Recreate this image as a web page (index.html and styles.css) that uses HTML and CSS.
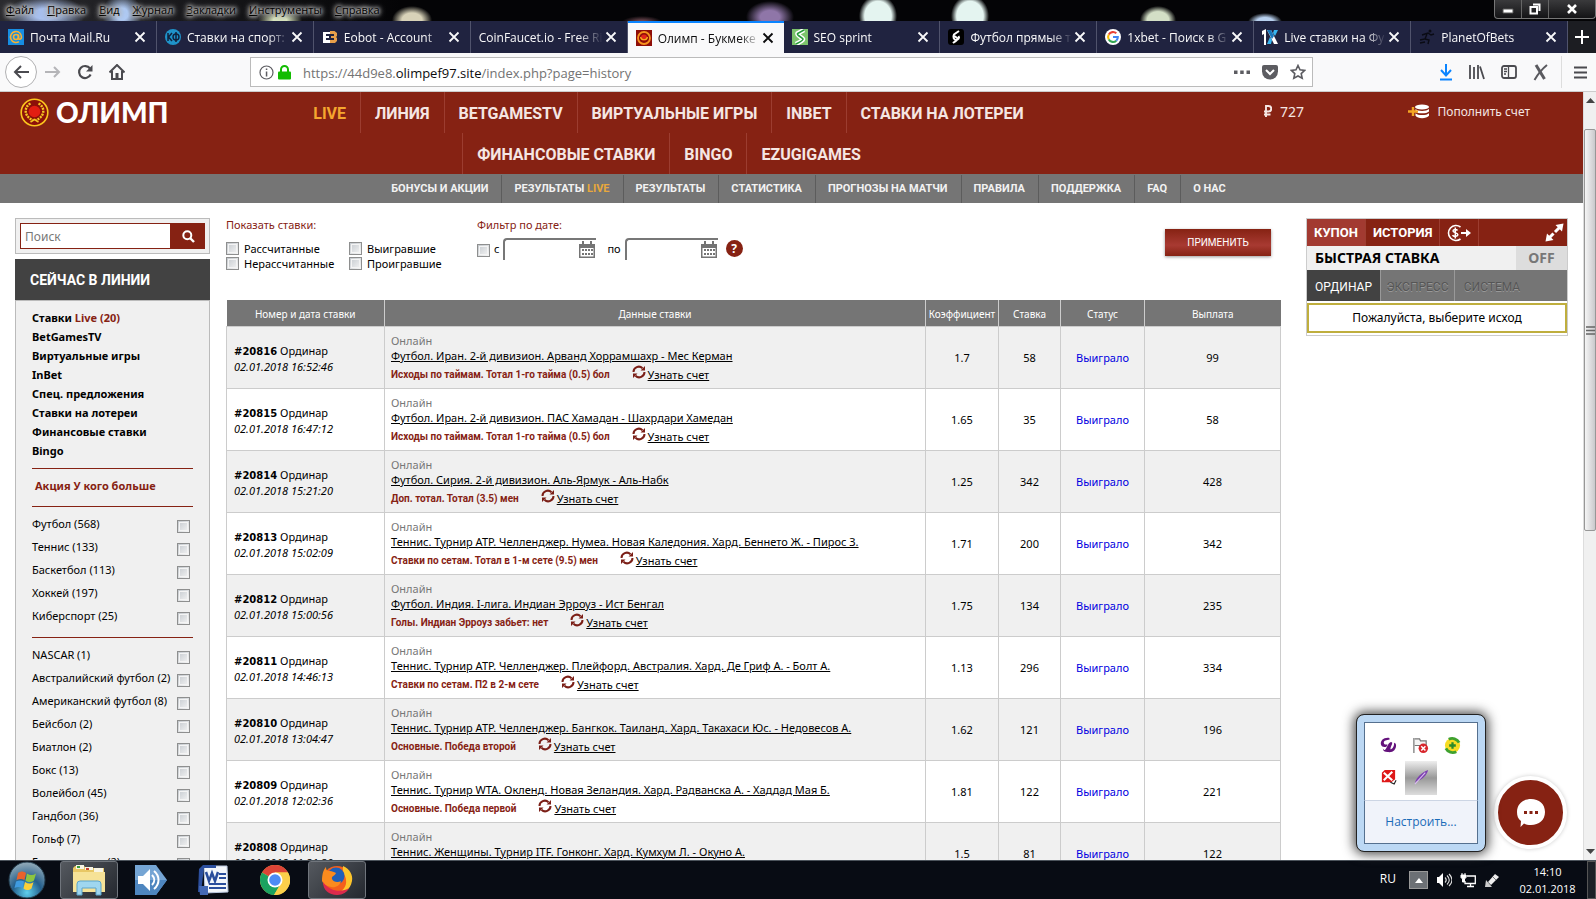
FILE: index.html
```html
<!DOCTYPE html>
<html lang="ru">
<head>
    <meta charset="UTF-8">
    <meta name="viewport" content="width=device-width, initial-scale=1.0">
    <title>Олимп - Букмекерская контора</title>
    <link rel="stylesheet" href="styles.css">
</head>
<body>
    <svg class="sprite" aria-hidden="true">
        <symbol id="x" viewBox="0 0 12 12"><path d="M1.500 1.500L10.500 10.500M10.500 1.500L1.500 10.500" fill="none" stroke="currentColor" stroke-width="1.800"/></symbol>
        <symbol id="refresh" viewBox="0 0 14 14"><path d="M1.500 7A5.300 5.300 0 0 1 10.500 3.200M12.500 7A5.300 5.300 0 0 1 3.500 10.800" fill="none" stroke="#7b1f17" stroke-width="2"/><path d="M13 1V5.500H8.500zM1 13V8.500H5.500z" fill="#7b1f17"/></symbol>
        <symbol id="calendar" viewBox="0 0 18 18"><path d="M1 3h16v14H1z" fill="#747474"/><path d="M4 0h2v4H4zM12 0h2v4h-2z" fill="#747474"/><path d="M2.500 7h13v8.500h-13z" fill="#fff"/><path d="M4 8h2v2H4zM7 8h2v2H7zM10 8h2v2h-2zM13 8h2v2h-2zM4 12h2v2H4zM7 12h2v2H7zM10 12h2v2h-2zM13 12h2v2h-2z" fill="#747474"/></symbol>
    </svg>

    <!-- Window menu -->
    <header class="menubar">
        <nav class="menu">
            <a href="#"><u>Ф</u>айл</a>
            <a href="#"><u>П</u>равка</a>
            <a href="#"><u>В</u>ид</a>
            <a href="#"><u>Ж</u>урнал</a>
            <a href="#"><u>З</u>акладки</a>
            <a href="#"><u>И</u>нструменты</a>
            <a href="#"><u>С</u>правка</a>
        </nav>
        <div class="window-buttons">
            <button type="button" aria-label="Свернуть"><svg width="12" height="12" viewBox="0 0 12 12"><path d="M1 6h10v4H1z" fill="#fff" stroke="#555"/></svg></button>
            <button type="button" aria-label="Восстановить"><svg width="12" height="12" viewBox="0 0 12 12"><path d="M4 1.500h6.500V8M1.500 4h6.500v6.500H1.500z" fill="none" stroke="#fff" stroke-width="2"/></svg></button>
            <button type="button" class="wide" aria-label="Закрыть"><svg width="12" height="12" viewBox="0 0 12 12"><path d="M2 2l8 8M10 2L2 10" stroke="#fff" stroke-width="2.600"/></svg></button>
        </div>
    </header>

    <!-- Browser tabs -->
    <div class="tabs">
        <div class="tab"><svg class="fav" viewBox="0 0 16 16"><path d="M0 0h16v16H0z" fill="#168de2"/><circle cx="8" cy="8" r="2.500" fill="none" stroke="#f9b233" stroke-width="1.600"/><path d="M10.500 5.500v3.500c0 2 3 1.500 3-1A5.500 5.500 0 1 0 11 12.600" fill="none" stroke="#f9b233" stroke-width="1.600"/></svg><span>Почта Mail.Ru</span><button type="button" aria-label="Закрыть вкладку"><svg><use href="#x"/></svg></button></div>
        <div class="tab"><svg class="fav" viewBox="0 0 16 16"><circle cx="8" cy="8" r="8" fill="#1f93c9"/><path d="M3 4v8M7 4L3.500 8 7 12M11 3v10" stroke="#10213c" stroke-width="1.500" fill="none"/><ellipse cx="11" cy="8" rx="3" ry="3" fill="none" stroke="#10213c" stroke-width="1.400"/></svg><span>Ставки на спорт:</span><button type="button" aria-label="Закрыть вкладку"><svg><use href="#x"/></svg></button></div>
        <div class="tab"><svg class="fav" viewBox="0 0 16 16"><path d="M1 3h7v2H4v2h3v2H4v2h4v3H1z" fill="#fff"/><path d="M8 2h4.500L15 4v3l-1 1 1 1v3l-2 2H8v-3h4V9H9V7h3V5H8z" fill="#e9a04a"/></svg><span>Eobot - Account</span><button type="button" aria-label="Закрыть вкладку"><svg><use href="#x"/></svg></button></div>
        <div class="tab"><span>CoinFaucet.io - Free Ri</span><button type="button" aria-label="Закрыть вкладку"><svg><use href="#x"/></svg></button></div>
        <div class="tab active"><svg class="fav" viewBox="0 0 16 16"><path d="M0 0h16v16H0z" fill="#8e0d08"/><circle cx="8" cy="8" r="6" fill="none" stroke="#f7931e" stroke-width="1.800"/><circle cx="8" cy="7.500" r="3" fill="#e2231a"/><path d="M4.500 7a3.600 3.600 0 0 0 7 0" fill="none" stroke="#f7b21e" stroke-width="1.200"/></svg><span>Олимп - Букмеке</span><button type="button" aria-label="Закрыть вкладку"><svg><use href="#x"/></svg></button></div>
        <div class="tab"><svg class="fav" viewBox="0 0 16 16"><path d="M0 0h16v16H0z" fill="#7cc36b"/><path d="M12 1L5.500 4.500c-1 2 5 4 5.500 5.500S7 13.500 4 15" fill="none" stroke="#fff" stroke-width="4.500"/><path d="M12 1L5.500 4.500c-1 2 5 4 5.500 5.500S7 13.500 4 15" fill="none" stroke="#279b38" stroke-width="1.600"/></svg><span>SEO sprint</span><button type="button" aria-label="Закрыть вкладку"><svg><use href="#x"/></svg></button></div>
        <div class="tab"><svg class="fav" viewBox="0 0 16 16"><rect width="16" height="16" rx="3" fill="#000"/><path d="M11 2L6 5.500c-1.500 2 4 2.500 3.500 4.500S7 12 5 14M6 5.500C4.500 8 6 11 8 11s4-2 2.500-4" fill="none" stroke="#fff" stroke-width="2"/></svg><span>Футбол прямые т</span><button type="button" aria-label="Закрыть вкладку"><svg><use href="#x"/></svg></button></div>
        <div class="tab"><svg class="fav" viewBox="0 0 16 16"><circle cx="8" cy="8" r="8" fill="#fff"/><g fill="none" stroke-width="2.100"><path d="M11.300 4.300A4.900 4.900 0 0 0 3.800 5.500" stroke="#ea4335"/><path d="M3.800 5.500a4.900 4.900 0 0 0 0 5" stroke="#fbbc05"/><path d="M3.800 10.500a4.900 4.900 0 0 0 7.500 1.200" stroke="#34a853"/><path d="M8 8h4.800a4.900 4.900 0 0 1-1.500 3.700" stroke="#4285f4"/></g></svg><span>1xbet - Поиск в G</span><button type="button" aria-label="Закрыть вкладку"><svg><use href="#x"/></svg></button></div>
        <div class="tab"><svg class="fav" viewBox="0 0 16 16"><path d="M0 2l4-2v16H2V5L0 6z" fill="#fff"/><path d="M5 1h4l7 14h-4z" fill="#fff"/><path d="M12 1h4l-3 6-2-3zM5 15h4l1-4-2-3z" fill="#36b4f0"/><path d="M5 1h4l3 6-2 3z" fill="#1677bd"/></svg><span>Live ставки на Фу</span><button type="button" aria-label="Закрыть вкладку"><svg><use href="#x"/></svg></button></div>
        <div class="tab"><svg class="fav" viewBox="0 0 16 16"><circle cx="11" cy="2" r="1.500" fill="#0a0b14"/><path d="M3 6l6-2 3 2 3-1M8 5l-2 5-5 1M6 10l4 1-1 4M1 14l5-1" fill="none" stroke="#0a0b14" stroke-width="1.400"/></svg><span>PlanetOfBets</span><button type="button" aria-label="Закрыть вкладку"><svg><use href="#x"/></svg></button></div>
        <button type="button" class="new-tab" aria-label="Новая вкладка"><svg width="14" height="14" viewBox="0 0 14 14"><path d="M7 0v14M0 7h14" stroke="#fff" stroke-width="2"/></svg></button>
    </div>

    <!-- Address bar -->
    <div class="toolbar">
        <div class="nav-buttons">
            <button type="button" class="back" aria-label="Назад"><svg width="16" height="16" viewBox="0 0 16 16"><path d="M16 8H2M8 2L2 8l6 6" fill="none" stroke="#4a4a4f" stroke-width="2"/></svg></button>
            <button type="button" aria-label="Вперёд"><svg width="16" height="16" viewBox="0 0 16 16"><path d="M0 8h14M9 3l5 5-5 5" fill="none" stroke="#b5b5b8" stroke-width="2"/></svg></button>
            <button type="button" aria-label="Обновить"><svg width="16" height="16" viewBox="0 0 16 16"><path d="M13 4.500A6 6 0 1 0 13.600 10.500" fill="none" stroke="#4a4a4f" stroke-width="2.200"/><path d="M15.500 1v6.500H9z" fill="#4a4a4f"/></svg></button>
            <button type="button" aria-label="Домой"><svg width="16" height="16" viewBox="0 0 16 16"><path d="M0.500 8.500L8 1l7.500 7.500M3 7v8h10V7" fill="none" stroke="#4a4a4f" stroke-width="2"/><path d="M6.500 9h3v6h-3z" fill="#4a4a4f"/></svg></button>
        </div>
        <div class="urlbar">
            <svg width="15" height="15" viewBox="0 0 15 15"><circle cx="7.500" cy="7.500" r="6.500" fill="none" stroke="#5c5c61" stroke-width="1.200"/><path d="M6.800 6.500h1.500v5H6.800zM6.800 3.500h1.500v1.600H6.800z" fill="#5c5c61"/></svg>
            <svg width="13" height="15" viewBox="0 0 13 15"><path d="M3 7V4.500a3.500 3.500 0 0 1 7 0V7" fill="none" stroke="#12bc00" stroke-width="2"/><rect y="6.500" width="13" height="8" rx="1" fill="#12bc00"/></svg>
            <div class="url">https://44d9e8.<b>olimpef97.site</b>/index.php?page=history</div>
            <svg width="16" height="16" viewBox="0 0 16 16"><path d="M0 6.500h3.500v3.500H0zM6.200 6.500h3.500v3.500H6.200zM12.500 6.500H16v3.500h-3.500z" fill="#5c5c61"/></svg>
            <svg width="16" height="16" viewBox="0 0 16 16"><path d="M0 3a2 2 0 0 1 2-2h12a2 2 0 0 1 2 2v4.500a8 8 0 0 1-16 0z" fill="#5c5c61"/><path d="M4 6l4 4 4-4" fill="none" stroke="#fff" stroke-width="2"/></svg>
            <svg width="16" height="16" viewBox="0 0 16 16"><path d="M8 1.500l2 4.300 4.700.6-3.500 3.200 1 4.700L8 12l-4.200 2.300 1-4.700L1.300 6.400 6 5.800z" fill="none" stroke="#5c5c61" stroke-width="1.600"/></svg>
        </div>
        <div class="tool-icons">
            <button type="button" aria-label="Загрузки"><svg width="14" height="18" viewBox="0 0 14 18"><path d="M7 1v11M2 7l5 5.500L12 7M1 16.500h12" fill="none" stroke="#0a84ff" stroke-width="2"/></svg></button>
            <button type="button" aria-label="Библиотека"><svg width="16" height="16" viewBox="0 0 16 16"><path d="M1 1v14M5 3v12M9 1v14M11 2.500L15 15" fill="none" stroke="#4a4a4f" stroke-width="1.800"/></svg></button>
            <button type="button" aria-label="Боковая панель"><svg width="16" height="14" viewBox="0 0 16 14"><rect x="1" y="1" width="14" height="12" rx="2" fill="none" stroke="#4a4a4f" stroke-width="1.800"/><path d="M7.500 1v12M3 4h3M3 6.500h3M3 9h2" stroke="#4a4a4f" stroke-width="1.300"/></svg></button>
            <button type="button" aria-label="Расширение"><svg width="16" height="17" viewBox="0 0 16 17"><path d="M3 1l8.500 14" fill="none" stroke="#5a5a5f" stroke-width="3"/><path d="M14 1C9 5 5 10 1.500 16" fill="none" stroke="#5a5a5f" stroke-width="2"/></svg></button>
            <button type="button" class="burger" aria-label="Меню"><svg width="13" height="13" viewBox="0 0 13 13"><path d="M0 1.500h13M0 6.500h13M0 11.500h13" stroke="#4a4a4f" stroke-width="2"/></svg></button>
        </div>
    </div>

    <div class="viewport">
        <div class="site">
            <header class="site-header">
                <a href="#" class="logo">
                    <svg width="29" height="29" viewBox="0 0 29 29"><circle cx="14.500" cy="14.500" r="13.300" fill="#8c1009" stroke="#fbc51e" stroke-width="1.600"/><circle cx="14.500" cy="13.500" r="5.800" fill="#e21d12"/><path d="M10.500 5.500C3.500 9 4 19 13 22M18.500 5.500C25.500 9 25 19 16 22" fill="none" stroke="#f5c623" stroke-width="2.400" stroke-dasharray="2 1"/><path d="M10.500 24l4-2.500 4 2.500" fill="none" stroke="#f5c623" stroke-width="1.500"/></svg>
                    <span>ОЛИМП</span>
                </a>
                <nav class="main-nav">
                    <ul>
                        <li><a href="#" class="live">LIVE</a></li>
                        <li><a href="#">ЛИНИЯ</a></li>
                        <li><a href="#">BETGAMESTV</a></li>
                        <li><a href="#">ВИРТУАЛЬНЫЕ ИГРЫ</a></li>
                        <li><a href="#">INBET</a></li>
                        <li><a href="#">СТАВКИ НА ЛОТЕРЕИ</a></li>
                    </ul>
                    <ul>
                        <li><a href="#">ФИНАНСОВЫЕ СТАВКИ</a></li>
                        <li><a href="#">BINGO</a></li>
                        <li><a href="#">EZUGIGAMES</a></li>
                    </ul>
                </nav>
                <div class="account">
                    <span class="balance"><svg width="8" height="12" viewBox="0 0 8 12"><path d="M2 12V1h2.500a2.700 2.700 0 0 1 0 5.500H0M0 9.500h6.500" fill="none" stroke="#f5e6e3" stroke-width="1.900"/></svg>727</span>
                    <a href="#" class="deposit"><svg width="22" height="15" viewBox="0 0 22 15"><ellipse cx="14" cy="3" rx="7" ry="2.600" fill="#fff"/><path d="M7.500 5c2 2.500 11 2.500 13.500 0v2.400c-2.500 2.600-11.500 2.600-13.500 0zM7.500 9.200c2 2.500 11 2.500 13.500 0v2.500c-2.500 3.300-11.500 3.300-13.500 0z" fill="#fff"/><path d="M0 7.500h10M5 3v9" stroke="#f5a623" stroke-width="2.400"/></svg>Пополнить счет</a>
                </div>
            </header>
            <nav class="sub-nav">
                <a href="#">БОНУСЫ И АКЦИИ</a>
                <a href="#">РЕЗУЛЬТАТЫ <em>LIVE</em></a>
                <a href="#">РЕЗУЛЬТАТЫ</a>
                <a href="#">СТАТИСТИКА</a>
                <a href="#">ПРОГНОЗЫ НА МАТЧИ</a>
                <a href="#">ПРАВИЛА</a>
                <a href="#">ПОДДЕРЖКА</a>
                <a href="#">FAQ</a>
                <a href="#">О НАС</a>
            </nav>

            <div class="columns">
                <aside class="sidebar">
                    <form class="search">
                        <input type="text" placeholder="Поиск" aria-label="Поиск">
                        <button type="button" aria-label="Найти"><svg width="13" height="13" viewBox="0 0 13 13"><circle cx="5.300" cy="5.300" r="4" fill="none" stroke="#fff" stroke-width="2"/><path d="M8 8l4 4" stroke="#fff" stroke-width="2.400"/></svg></button>
                    </form>
                    <h2>СЕЙЧАС В ЛИНИИ</h2>
                    <div class="side-box">
                        <ul class="links">
                            <li><a href="#">Ставки <em>Live (20)</em></a></li>
                            <li><a href="#">BetGamesTV</a></li>
                            <li><a href="#">Виртуальные игры</a></li>
                            <li><a href="#">InBet</a></li>
                            <li><a href="#">Спец. предложения</a></li>
                            <li><a href="#">Ставки на лотереи</a></li>
                            <li><a href="#">Финансовые ставки</a></li>
                            <li><a href="#">Bingo</a></li>
                        </ul>
                        <a href="#" class="promo">Акция У кого больше</a>
                        <div class="sports">
                            <label>Футбол (568)<input type="checkbox"></label>
                            <label>Теннис (133)<input type="checkbox"></label>
                            <label>Баскетбол (113)<input type="checkbox"></label>
                            <label>Хоккей (197)<input type="checkbox"></label>
                            <label>Киберспорт (25)<input type="checkbox"></label>
                        </div>
                        <div class="sports all">
                            <label>NASCAR (1)<input type="checkbox"></label>
                            <label>Австралийский футбол (2)<input type="checkbox"></label>
                            <label>Американский футбол (8)<input type="checkbox"></label>
                            <label>Бейсбол (2)<input type="checkbox"></label>
                            <label>Биатлон (2)<input type="checkbox"></label>
                            <label>Бокс (13)<input type="checkbox"></label>
                            <label>Волейбол (45)<input type="checkbox"></label>
                            <label>Гандбол (36)<input type="checkbox"></label>
                            <label>Гольф (7)<input type="checkbox"></label>
                            <label>Горные лыжи (2)<input type="checkbox"></label>
                        </div>
                    </div>
                </aside>

                <main class="history">
                    <form class="filters">
                        <fieldset>
                            <legend>Показать ставки:</legend>
                            <div class="checks">
                                <label><input type="checkbox">Рассчитанные</label>
                                <label><input type="checkbox">Выигравшие</label>
                                <label><input type="checkbox">Нерассчитанные</label>
                                <label><input type="checkbox">Проигравшие</label>
                            </div>
                        </fieldset>
                        <fieldset>
                            <legend>Фильтр по дате:</legend>
                            <div class="dates">
                                <input type="checkbox" id="byDate">
                                <label for="byDate">с</label>
                                <span class="date"><input type="text" aria-label="Дата с"><svg width="18" height="18"><use href="#calendar"/></svg></span>
                                <label for="dateTo" class="to">по</label>
                                <span class="date"><input type="text" id="dateTo"><svg width="18" height="18"><use href="#calendar"/></svg></span>
                                <button type="button" class="help">?</button>
                            </div>
                        </fieldset>
                        <button type="button" class="apply">ПРИМЕНИТЬ</button>
                    </form>

                    <table class="bets">
                        <colgroup><col class="c-num"><col><col class="c-odds"><col class="c-stake"><col class="c-status"><col class="c-pay"></colgroup>
                        <thead>
                            <tr><th>Номер и дата ставки</th><th>Данные ставки</th><th>Коэффициент</th><th>Ставка</th><th>Статус</th><th>Выплата</th></tr>
                        </thead>
                        <tbody>
                            <tr>
                                <td><b>#20816</b> Ординар<i>02.01.2018 16:52:46</i></td>
                                <td><small>Онлайн</small><a href="#">Футбол. Иран. 2-й дивизион. Арванд Хоррамшахр - Мес Керман</a><p><strong>Исходы по таймам. Тотал 1-го тайма (0.5) бол</strong><svg><use href="#refresh"/></svg><a href="#">Узнать счет</a></p></td>
                                <td>1.7</td><td>58</td><td class="won">Выиграло</td><td>99</td>
                            </tr>
                            <tr>
                                <td><b>#20815</b> Ординар<i>02.01.2018 16:47:12</i></td>
                                <td><small>Онлайн</small><a href="#">Футбол. Иран. 2-й дивизион. ПАС Хамадан - Шахрдари Хамедан</a><p><strong>Исходы по таймам. Тотал 1-го тайма (0.5) бол</strong><svg><use href="#refresh"/></svg><a href="#">Узнать счет</a></p></td>
                                <td>1.65</td><td>35</td><td class="won">Выиграло</td><td>58</td>
                            </tr>
                            <tr>
                                <td><b>#20814</b> Ординар<i>02.01.2018 15:21:20</i></td>
                                <td><small>Онлайн</small><a href="#">Футбол. Сирия. 2-й дивизион. Аль-Ярмук - Аль-Набк</a><p><strong>Доп. тотал. Тотал (3.5) мен</strong><svg><use href="#refresh"/></svg><a href="#">Узнать счет</a></p></td>
                                <td>1.25</td><td>342</td><td class="won">Выиграло</td><td>428</td>
                            </tr>
                            <tr>
                                <td><b>#20813</b> Ординар<i>02.01.2018 15:02:09</i></td>
                                <td><small>Онлайн</small><a href="#">Теннис. Турнир ATP. Челленджер. Нумеа. Новая Каледония. Хард. Беннето Ж. - Пирос З.</a><p><strong>Ставки по сетам. Тотал в 1-м сете (9.5) мен</strong><svg><use href="#refresh"/></svg><a href="#">Узнать счет</a></p></td>
                                <td>1.71</td><td>200</td><td class="won">Выиграло</td><td>342</td>
                            </tr>
                            <tr>
                                <td><b>#20812</b> Ординар<i>02.01.2018 15:00:56</i></td>
                                <td><small>Онлайн</small><a href="#">Футбол. Индия. I-лига. Индиан Эрроуз - Ист Бенгал</a><p><strong>Голы. Индиан Эрроуз забьет: нет</strong><svg><use href="#refresh"/></svg><a href="#">Узнать счет</a></p></td>
                                <td>1.75</td><td>134</td><td class="won">Выиграло</td><td>235</td>
                            </tr>
                            <tr>
                                <td><b>#20811</b> Ординар<i>02.01.2018 14:46:13</i></td>
                                <td><small>Онлайн</small><a href="#">Теннис. Турнир ATP. Челленджер. Плейфорд. Австралия. Хард. Де Гриф А. - Болт А.</a><p><strong>Ставки по сетам. П2 в 2-м сете</strong><svg><use href="#refresh"/></svg><a href="#">Узнать счет</a></p></td>
                                <td>1.13</td><td>296</td><td class="won">Выиграло</td><td>334</td>
                            </tr>
                            <tr>
                                <td><b>#20810</b> Ординар<i>02.01.2018 13:04:47</i></td>
                                <td><small>Онлайн</small><a href="#">Теннис. Турнир ATP. Челленджер. Бангкок. Таиланд. Хард. Такахаси Юс. - Недовесов А.</a><p><strong>Основные. Победа второй</strong><svg><use href="#refresh"/></svg><a href="#">Узнать счет</a></p></td>
                                <td>1.62</td><td>121</td><td class="won">Выиграло</td><td>196</td>
                            </tr>
                            <tr>
                                <td><b>#20809</b> Ординар<i>02.01.2018 12:02:36</i></td>
                                <td><small>Онлайн</small><a href="#">Теннис. Турнир WTA. Окленд. Новая Зеландия. Хард. Радванска А. - Хаддад Мая Б.</a><p><strong>Основные. Победа первой</strong><svg><use href="#refresh"/></svg><a href="#">Узнать счет</a></p></td>
                                <td>1.81</td><td>122</td><td class="won">Выиграло</td><td>221</td>
                            </tr>
                            <tr>
                                <td><b>#20808</b> Ординар<i>02.01.2018 11:21:30</i></td>
                                <td><small>Онлайн</small><a href="#">Теннис. Женщины. Турнир ITF. Гонконг. Хард. Кумхум Л. - Окуно А.</a><p><strong>Основные. Победа первой</strong><svg><use href="#refresh"/></svg><a href="#">Узнать счет</a></p></td>
                                <td>1.5</td><td>81</td><td class="won">Выиграло</td><td>122</td>
                            </tr>
                        </tbody>
                    </table>
                </main>

                <aside class="coupon">
                    <div class="coupon-tabs">
                        <button type="button" class="current">КУПОН</button>
                        <button type="button">ИСТОРИЯ</button>
                        <button type="button" class="cash" aria-label="Продать ставку"><svg width="24" height="18" viewBox="0 0 24 18"><path d="M13.500 3A7.500 7.500 0 1 0 13.500 15" fill="none" stroke="#fff" stroke-width="1.600"/><path d="M10.500 6.500C9.500 5 6 5.200 6 7s4.800 1.500 4.800 3.600S6.500 13 5.500 11.200M8.300 3.500v11" fill="none" stroke="#fff" stroke-width="1.500"/><path d="M14 8h5V5l5 4-5 4v-3h-5z" fill="#fff"/></svg></button>
                        <button type="button" class="expand" aria-label="Развернуть"><svg width="19" height="19" viewBox="0 0 19 19"><path d="M4 15L8.500 10.500M10 9L15 4" stroke="#fff" stroke-width="3"/><path d="M18.500.500L17 8.500L10.500 2zM.5 18.500L2 10.500L8.500 17z" fill="#fff"/></svg></button>
                    </div>
                    <div class="quick"><span>БЫСТРАЯ СТАВКА</span><button type="button">OFF</button></div>
                    <div class="types">
                        <button type="button" class="current">ОРДИНАР</button>
                        <button type="button">ЭКСПРЕСС</button>
                        <button type="button">СИСТЕМА</button>
                    </div>
                    <p class="message">Пожалуйста, выберите исход</p>
                </aside>
            </div>
        </div>
        <div class="scrollbar">
            <svg width="9" height="5" viewBox="0 0 9 5"><path d="M0 5l4.500-5L9 5z" fill="#444"/></svg>
            <div class="thumb"><svg width="9" height="9" viewBox="0 0 9 9"><path d="M0 1h9M0 4.500h9M0 8h9" stroke="#666" stroke-width="1.500"/></svg></div>
            <svg width="9" height="5" viewBox="0 0 9 5"><path d="M0 0h9L4.500 5z" fill="#444"/></svg>
        </div>
        <button type="button" class="chat" aria-label="Чат"><svg width="30" height="30" viewBox="0 0 30 30"><path d="M15 1c8 0 14 5 14 13s-6 13-14 13c-3 0-5-.5-7-1.500L4.500 29 5 23C2 21 1 18 1 14 1 6 7 1 15 1z" fill="#fff"/><path d="M8 13h3v3H8zM13.500 13h3v3h-3zM19 13h3v3h-3z" fill="#862213"/></svg></button>
    </div>

    <!-- Hidden tray icons -->
    <div class="tray-popup">
        <div class="tray-icons">
            <svg viewBox="0 0 18 18"><path d="M10 1C4 0 0 4 1 8c1 3 4 3 6 2L8 8C6 8 4 8 4 6s3-3 6-3zM8 16c6 1 9-3 9-7 0-2-1-3-2-3 0 4-2 7-4 7 0-3 2-5 2-7-2-2-4 1-6 5s-3 3-4 1c0 3 2 4 5 4z" fill="#64127c"/></svg>
            <svg viewBox="0 0 18 18"><path d="M2 1v16M3 2h5l1 2h6v7H9L8 9H3" fill="#f4f4f4" stroke="#777" stroke-width="1.300"/><circle cx="12" cy="12" r="5" fill="#d8262c"/><path d="M9.800 9.800l4.400 4.400M14.200 9.800l-4.400 4.400" stroke="#fff" stroke-width="1.600"/></svg>
            <svg viewBox="0 0 18 18"><circle cx="9" cy="9" r="8" fill="#f7dc22"/><path d="M5 2.500A8 8 0 0 1 16 6M13 15.500A8 8 0 0 1 2 12" fill="none" stroke="#3fa12e" stroke-width="3"/><path d="M9 5.500v7M5.500 9h7" stroke="#2a8a2a" stroke-width="2.400"/></svg>
            <svg viewBox="0 0 18 18"><path d="M5 2h11v10l-4 3H2V5z" fill="#de1818"/><path d="M4 5l9 8M13 4L4 13" stroke="#fff" stroke-width="2.200"/><path d="M11 15l4 2 2-4" stroke="#222" stroke-width="1.200" fill="none"/></svg>
            <span class="hot"><svg viewBox="0 0 18 18"><path d="M2 16C4 9 9 5 16 2c-1 5-6 10-12 12z" fill="#7d3fb0"/><path d="M2 17L13 5" stroke="#d9bdf0" stroke-width="1.200"/></svg></span>
        </div>
        <a href="#">Настроить...</a>
    </div>

    <!-- Taskbar -->
    <footer class="taskbar">
        <button type="button" class="start" aria-label="Пуск"><svg width="38" height="38" viewBox="0 0 38 38"><defs><radialGradient id="orb" cx="50%" cy="85%" r="80%"><stop offset="0" stop-color="#5fd0ee"/><stop offset=".5" stop-color="#245f8c"/><stop offset="1" stop-color="#8aa5b5"/></radialGradient></defs><circle cx="19" cy="19" r="18" fill="url(#orb)" stroke="#233c4c"/><path d="M10 12c3-2 5-2 8 0l-1.500 7c-3-1.500-5-1.500-8 0z" fill="#e8622c"/><path d="M19 12.500c3 2 6 2 9 0l-2 7c-3 2-5.500 2-8.500 0z" fill="#8cc540"/><path d="M8 20.500c3-1.500 5-1.500 8 0L14.500 27c-3-1.500-5-1.500-8 0z" fill="#3f9be0"/><path d="M17 21c3 2 6 2 8.500 0l-2 6.500c-3 2-5 2-8 0z" fill="#fcd037"/></svg></button>
        <button type="button" class="task open" aria-label="Проводник"><svg width="34" height="32" viewBox="0 0 34 32"><path d="M1 4l2-2h9l2 2h18v24H1z" fill="#e8c765"/><path d="M4 1h8v4H4zM13 3h8v3h-8zM22 4h9v4h-9z" fill="#f7f4e4"/><path d="M5 2h3v2H5z" fill="#3b9b3b"/><path d="M14 4h3v2h-3z" fill="#c8402e"/><path d="M1 8h32v20H1z" fill="#f6e297"/><path d="M5 31V20a3 3 0 0 1 3-3h18a3 3 0 0 1 3 3v11h-5v-7H10v7z" fill="#9fd6ef" stroke="#5aa4cb"/></svg></button>
        <button type="button" class="task" aria-label="Громкость"><svg width="34" height="32" viewBox="0 0 34 32"><path d="M1 1h21l11 15-11 15H1z" fill="#75a5d4"/><path d="M1 16h32L22 31H1z" fill="#4e86bf"/><path d="M4 12h5l7-7v22l-7-7H4z" fill="#fff"/><path d="M18 11c3 3 3 7 0 10M20 7c6 5 6 13 0 18" fill="none" stroke="#fff" stroke-width="2"/></svg></button>
        <button type="button" class="task" aria-label="Word"><svg width="32" height="32" viewBox="0 0 32 32"><path d="M7 2h23l1 26-23 1z" fill="#f3f6fb" stroke="#b9c6de"/><path d="M2 5l4-4h13v3H7L4 28H1z" fill="#2c4f9e"/><path d="M2 22h9v9H3z" fill="#4469b5"/><path d="M9 8l3 9 3-8 3 8 3-9" fill="none" stroke="#2a4d9c" stroke-width="2.500"/><path d="M22 10h7M22 14h7M12 20h17M12 24h17" stroke="#2a4d9c" stroke-width="2"/></svg></button>
        <button type="button" class="task" aria-label="Chrome"><svg width="30" height="30" viewBox="0 0 30 30"><circle cx="15" cy="15" r="15" fill="#fcd04a"/><path d="M15 15L2 7.500A15 15 0 0 1 28 7.500H15z" fill="#dc4437"/><path d="M2 7.500A15 15 0 0 0 14 30l7.500-12L15 15z" fill="#1ba260"/><path d="M15 7.500h13A15 15 0 0 1 14 30l7-12z" fill="#fcd04a"/><circle cx="15" cy="15" r="7.500" fill="#fff"/><circle cx="15" cy="15" r="5.800" fill="#4c8bf5"/></svg></button>
        <button type="button" class="task open" aria-label="Firefox"><svg width="32" height="32" viewBox="0 0 32 32"><circle cx="16" cy="16" r="14" fill="#f4601c"/><path d="M22 2c7 3 10 9 9 15-2 10-9 14-17 13 8-2 12-8 11-14 0-4-4-7-3-14z" fill="#fdc52b"/><circle cx="15" cy="12" r="8.500" fill="#1f5fb8"/><path d="M1 17C1 9 3 5 5 3c0 3 1 4 4 4 2 0 4 1 6 2-1 3-5 3-4 6s6 4 9 2c-1 5-6 7-10 6-5-1-8-3-9-6z" fill="#fb8b1e"/><path d="M2 18c0 8 6 13 14 13 6 0 10-3 12-7-6 4-18 5-26-6z" fill="#dc2a4c"/></svg></button>
        <div class="tray">
            <span class="lang">RU</span>
            <button type="button" class="up" aria-label="Показать скрытые значки"><svg width="8" height="5" viewBox="0 0 8 5"><path d="M0 5l4-5 4 5z" fill="#fff"/></svg></button>
            <svg width="16" height="16" viewBox="0 0 16 16"><path d="M1 5h2l4-4v14l-4-4H1z" fill="#fff"/><path d="M9 5.500c1.500 1.500 1.500 3.500 0 5M11 3.500c3 3 3 6 0 9M13 2c4 4 4 8 0 12" fill="none" stroke="#ddd" stroke-width="1.100"/></svg>
            <svg width="16" height="16" viewBox="0 0 16 16"><path d="M6.500 4h8.800v7.500H5V9M7 14.500h7M10.500 12v2" fill="none" stroke="#fff" stroke-width="1.300"/><path d="M1 3h5v2.500L4.500 7v3h-2V7L1 5.500zM2 1v2M5 1v2" fill="#fff" stroke="#fff" stroke-width="1"/></svg>
            <svg width="16" height="16" viewBox="0 0 16 16"><path d="M11 2l4 3-8 8-3-3z" fill="#eee"/><path d="M2 8l-1 7h7z" fill="#ccc"/><path d="M9 5l3 3" stroke="#777"/></svg>
            <time class="clock">14:10<br>02.01.2018</time>
        </div>
        <button type="button" class="show-desktop" aria-label="Свернуть все окна"></button>
    </footer>
</body>
</html>
```

FILE: styles.css
```css
* {
    margin: 0;
    padding: 0;
    box-sizing: border-box;
}

body {
    position: relative;
    display: flex;
    flex-direction: column;
    height: 100vh;
    overflow: hidden;
    background: #fff;
    color: #000;
    font-family: "Noto Sans", Tahoma, sans-serif;
    font-size: 11px;
}

a {
    color: inherit;
    text-decoration: none;
}

button {
    border: none;
    background: none;
    color: inherit;
    font: inherit;
}

ul {
    list-style: none;
}

svg {
    flex-shrink: 0;
}

.sprite {
    position: absolute;
    width: 0;
    height: 0;
}

/* Window menu */
.menubar {
    display: flex;
    justify-content: space-between;
    flex-shrink: 0;
    height: 21px;
    background:
        radial-gradient(ellipse 40px 18px at 46px 14px, #a8c0ee 30%, transparent),
        radial-gradient(ellipse 20px 20px at 122px 14px, #b0cbf4 30%, transparent),
        radial-gradient(ellipse 22px 12px at 280px 20px, #dce8c0 30%, transparent),
        radial-gradient(ellipse 20px 14px at 412px 20px, #d8d2b8 50%, transparent),
        radial-gradient(ellipse 20px 6px at 642px 22px, #8c5b66, transparent),
        radial-gradient(ellipse 24px 16px at 770px 17px, #8f76a8 40%, transparent),
        radial-gradient(ellipse 19px 21px at 878px 16px, #e4f4f0 70%, transparent),
        radial-gradient(ellipse 19px 21px at 970px 16px, #e4f4f0 70%, transparent),
        radial-gradient(ellipse 18px 14px at 1158px 20px, #d3dfc6 60%, transparent),
        radial-gradient(ellipse 17px 9px at 1265px 22px, #b8d0ee 50%, transparent),
        linear-gradient(to right, #2a2a2e, #040406 400px);
}

.menu {
    display: flex;
    gap: 13px;
    padding-left: 6px;
    font-family: "Open Sans", "Segoe UI", sans-serif;
    font-size: 11px;
    line-height: 20px;
    text-shadow: 0 0 3px #bbb, 0 0 4px #bbb, 0 0 5px #aaa, 0 0 6px #aaa, 0 0 8px #aaa;
}

.window-buttons {
    display: flex;
    height: 19px;
    border: 1px solid #777;
    border-top: none;
    border-radius: 0 0 4px 4px;
    background: linear-gradient(#3a3a3c, #141416);
}

.window-buttons button {
    display: flex;
    align-items: center;
    justify-content: center;
    width: 27px;
    border-right: 1px solid #666;
}

.window-buttons .wide {
    width: 46px;
    border-right: none;
}

/* Tabs */
.tabs {
    display: flex;
    flex-shrink: 0;
    height: 32px;
    background: #202340;
    color: #f9f9fa;
    font-family: "Open Sans", "Segoe UI", sans-serif;
    font-size: 12px;
}

.tab {
    display: flex;
    flex: 1;
    align-items: center;
    gap: 6px;
    min-width: 0;
    padding: 0 10px 0 8px;
    border-right: 1px solid #50536c;
}

.tab.active {
    border-top: 2px solid #0a84ff;
    border-right: none;
    background: #f9f9fa;
    color: #0c0c0d;
}

.tab .fav {
    width: 16px;
    height: 16px;
}

.tab span {
    flex: 1;
    overflow: hidden;
    margin-right: -4px;
    white-space: nowrap;
    mask-image: linear-gradient(to right, #000 80%, transparent);
}

.tab button {
    display: flex;
}

.tab button svg {
    width: 12px;
    height: 12px;
}

.new-tab {
    display: flex;
    align-items: center;
    justify-content: center;
    width: 28px;
    background: #1c1d22;
}

/* Address bar */
.toolbar {
    display: flex;
    align-items: center;
    flex-shrink: 0;
    height: 39px;
    border-bottom: 1px solid #ccc;
    background: #f9f9fa;
}

.nav-buttons {
    display: flex;
    align-items: center;
    gap: 16px;
    width: 250px;
    padding-left: 5px;
}

.nav-buttons button {
    display: flex;
}

.nav-buttons .back {
    align-items: center;
    justify-content: center;
    width: 32px;
    height: 32px;
    margin-right: -8px;
    border: 1px solid #b1b1b3;
    border-radius: 50%;
    background: #fff;
}

.urlbar {
    display: flex;
    flex: 1;
    align-items: center;
    gap: 12px;
    height: 30px;
    padding: 0 6px 0 8px;
    border: 1px solid #bbb;
    background: #fff;
}

.urlbar svg:first-child {
    margin-right: -8px;
}

.url {
    flex: 1;
    padding-top: 1px;
    color: #737373;
    font-family: "Open Sans", "Segoe UI", sans-serif;
    font-size: 13px;
}

.url b {
    color: #0c0c0d;
    font-weight: 400;
}

.tool-icons {
    display: flex;
    align-items: center;
    justify-content: flex-end;
    gap: 16px;
    width: 283px;
    padding-right: 9px;
}

.tool-icons button {
    display: flex;
    align-items: center;
}

.tool-icons .burger {
    height: 32px;
    margin-left: -4px;
    padding-left: 12px;
    border-left: 1px solid #ddd;
}

/* Page area */
.viewport {
    position: relative;
    display: flex;
    flex: 1;
    min-height: 0;
    overflow: hidden;
}

.site {
    flex: 1;
    min-width: 0;
    overflow: hidden;
    background: #fff;
}

.site-header {
    display: grid;
    grid-template-columns: 300px minmax(0, 1fr) 546px;
    background: #862213;
    color: #f5e6e3;
}

.logo {
    display: flex;
    gap: 7px;
    align-items: center;
    height: 40px;
    padding-left: 20px;
    color: #fff;
    font-family: Lato, sans-serif;
    font-size: 28px;
    font-weight: 900;
}

.main-nav ul {
    display: flex;
    justify-content: center;
}

.main-nav li {
    padding: 2px 14px 0;
    border-left: 1px solid #9c3d30;
    font-family: Roboto, sans-serif;
    font-size: 16px;
    font-weight: 700;
    line-height: 39px;
    white-space: nowrap;
}

.main-nav ul:first-child li:first-child {
    border-left: none;
}

.live {
    color: #f5a62f;
}

.account {
    display: flex;
    justify-content: space-between;
    align-items: center;
    height: 38px;
    padding: 0 53px 0 227px;
    font-size: 12px;
}

.balance {
    display: flex;
    gap: 8px;
    align-items: center;
    font-size: 14px;
}

.deposit {
    display: flex;
    gap: 8px;
    align-items: center;
}

.sub-nav {
    display: flex;
    justify-content: center;
    padding: 1px 0 0 35px;
    background: #757575;
    color: #f2f2f2;
    font-family: Roboto, sans-serif;
    font-size: 11px;
    font-weight: 700;
    line-height: 28px;
    white-space: nowrap;
}

.sub-nav a {
    padding: 0 13px 0 12px;
    border-right: 1px solid #5c5c5c;
}

.sub-nav a:last-child {
    border-right: none;
}

.sub-nav em {
    color: #e8a83c;
    font-style: normal;
}

.columns {
    display: grid;
    grid-template-columns: 195px 1fr 262px;
    padding: 15px 15px 0;
}

/* Sidebar */
.search {
    display: flex;
    height: 36px;
    margin-bottom: 5px;
    padding: 4px;
    border: 1px solid #bbb;
    background: #f0f0f0;
}

.search input {
    flex: 1;
    min-width: 0;
    padding: 0 4px;
    border: 1px solid #862213;
    background: #fff;
    font-family: "Noto Sans", sans-serif;
    font-size: 12px;
}

.search input::placeholder {
    color: #777;
}

.search button {
    display: flex;
    align-items: center;
    justify-content: center;
    width: 34px;
    background: #862213;
}

.sidebar h2 {
    padding: 2px 0 0 15px;
    background: #424242;
    color: #fff;
    font-family: Roboto, sans-serif;
    font-size: 14px;
    line-height: 39px;
}

.side-box {
    padding: 7px 16px;
    border: 1px solid #bbb;
    background: #f0f0f0;
}

.links {
    padding-bottom: 8px;
    border-bottom: 1px solid #862213;
    font-size: 11px;
    font-weight: 700;
    line-height: 19px;
}

.links em,
.promo {
    color: #862213;
    font-style: normal;
}

.promo {
    display: block;
    padding: 0 0 3px 3px;
    border-bottom: 1px solid #862213;
    font-size: 11px;
    font-weight: 700;
    line-height: 34px;
}

.sports {
    padding: 5px 0 10px;
}

.sports.all {
    border-top: 1px solid #862213;
}

.sports label {
    display: flex;
    align-items: center;
    justify-content: space-between;
    height: 23px;
    font-size: 11px;
    white-space: nowrap;
}

.sports input {
    margin: 6px 3px 0 0;
}

input[type="checkbox"] {
    flex-shrink: 0;
    width: 13px;
    height: 13px;
    border: 1px solid #8e8f8f;
    outline: 1px solid #f4f4f4;
    outline-offset: -3px;
    background: linear-gradient(135deg, #c4c9ce, #f6f6f6);
    appearance: none;
}

/* History */
.history {
    min-width: 0;
    padding: 0 25px 0 16px;
}

.filters {
    display: flex;
    align-items: flex-start;
    height: 82px;
    font-size: 11px;
}

.filters fieldset {
    border: none;
}

.filters fieldset:first-child {
    width: 251px;
}

.filters legend {
    color: #862213;
    line-height: 14px;
}

.checks {
    display: grid;
    grid-template-columns: 123px 1fr;
    padding-top: 9px;
    line-height: 15px;
}

.checks label {
    display: flex;
    gap: 5px;
    align-items: center;
}

.dates {
    display: flex;
    gap: 4px;
    align-items: center;
    height: 29px;
    padding-top: 4px;
}

.dates > input {
    margin-top: 3px;
}

.dates .to {
    margin-left: 7px;
}

.date {
    display: flex;
    align-items: center;
    width: 93px;
    height: 22px;
    border-top: 2px solid #777;
    border-left: 2px solid #777;
    border-radius: 4px 0 0 0;
    background: #fff;
}

.date input {
    flex: 1;
    min-width: 0;
    border: none;
}

.help {
    width: 17px;
    height: 17px;
    margin-left: 4px;
    border-radius: 50%;
    background: #862213;
    color: #fff;
    font-size: 12px;
    font-weight: 700;
    line-height: 17px;
}

.apply {
    width: 106px;
    height: 27px;
    margin: 11px 10px 0 auto;
    background: linear-gradient(#862213, #a83a32 60%, #862213);
    box-shadow: 0 1px 3px #999;
    color: #fff;
    font-family: Roboto, sans-serif;
    font-size: 10px;
}

.bets {
    width: 100%;
    border-collapse: collapse;
    table-layout: fixed;
}

.c-num {
    width: 158px;
}

.c-odds {
    width: 73px;
}

.c-stake {
    width: 62px;
}

.c-status {
    width: 84px;
}

.c-pay {
    width: 136px;
}

.bets th {
    height: 26px;
    padding-top: 2px;
    border-right: 1px solid #ccc;
    background: #757575;
    color: #fff;
    font-size: 10px;
    font-weight: 400;
    white-space: nowrap;
}

.bets th:last-child {
    border-right: none;
}

.bets td {
    height: 62px;
    border: 1px solid #ccc;
    text-align: center;
    line-height: 15px;
}

.bets td:nth-child(1),
.bets td:nth-child(2) {
    padding: 2px 0 0 6px;
    text-align: left;
    white-space: nowrap;
}

.bets td:nth-child(1) {
    padding-left: 7px;
}

.bets tr:nth-child(odd) td {
    background: #f0f0f0;
}

.bets b {
    font-family: "DejaVu Sans", sans-serif;
    font-size: 10px;
}

.bets i,
.bets small {
    display: block;
}

.bets small {
    color: #777;
    font-size: 11px;
}

.bets a {
    text-decoration: underline;
}

.bets p {
    display: flex;
    align-items: center;
    padding-top: 2px;
}

.bets strong {
    margin-right: 22px;
    color: #862213;
    font-family: Roboto, sans-serif;
    font-size: 10px;
}

.bets svg {
    width: 14px;
    height: 14px;
    margin: 0 2px 4px 0;
}

.bets .won {
    color: #0000e0;
}

/* Coupon */
.coupon {
    align-self: start;
    padding-bottom: 2px;
    border: 1px solid #ccc;
    font-family: Roboto, sans-serif;
}

.coupon-tabs {
    display: flex;
    height: 27px;
    background: #862213;
    color: #fff;
    font-size: 13px;
    font-weight: 700;
}

.coupon-tabs button {
    display: flex;
    align-items: center;
    padding: 0 7px;
    border-right: 1px solid #9c3d30;
}

.coupon-tabs .current {
    background: #a23a31;
}

.coupon-tabs .expand {
    margin-left: auto;
    padding: 0 3px;
    border-right: none;
}

.quick {
    display: flex;
    justify-content: space-between;
    background: #f0f0f0;
    font-family: "Noto Sans", sans-serif;
    font-size: 14px;
    font-weight: 700;
    line-height: 24px;
}

.quick span {
    padding-left: 8px;
}

.quick button {
    width: 51px;
    background: #ddd;
    color: #777;
}

.types {
    display: flex;
    height: 31px;
    background: #757575;
    color: #555;
    font-size: 12px;
}

.types button {
    width: 74px;
    padding-top: 2px;
    border-right: 1px solid #999;
    text-shadow: 0 1px 0 #999;
}

.types button:last-child {
    border-right: none;
}

.types .current {
    background: #424242;
    color: #fff;
    text-shadow: none;
}

.message {
    margin-top: 2px;
    border: 2px solid #bfae3e;
    background: #fff;
    font-family: "Noto Sans", sans-serif;
    font-size: 12px;
    line-height: 26px;
    text-align: center;
}

.scrollbar {
    display: flex;
    flex-direction: column;
    align-items: center;
    width: 13px;
    padding: 6px 0;
    border-left: 1px solid #ddd;
    background: #f0f0f0;
}

.scrollbar .thumb {
    display: flex;
    align-items: center;
    justify-content: center;
    width: 12px;
    height: 402px;
    margin: 26px 0 auto;
    border: 1px solid #979797;
    border-radius: 2px;
    background: linear-gradient(to right, #f5f5f5, #c9c9cc);
}

.chat {
    position: absolute;
    right: 29px;
    bottom: 11px;
    display: flex;
    align-items: center;
    justify-content: center;
    width: 73px;
    height: 73px;
    border: 4px solid #fff;
    border-radius: 50%;
    background: #862213;
    box-shadow: 0 0 4px #ccc;
}

/* Tray popup */
.tray-popup {
    position: absolute;
    right: 111px;
    bottom: 48px;
    width: 128px;
    height: 136px;
    border: 7px solid #bcd8f4;
    border-radius: 7px;
    outline: 1px solid #222;
    background: #f0f3fa;
    box-shadow: 0 0 12px 3px #444;
    text-align: center;
}

.tray-icons {
    display: grid;
    grid-template-columns: repeat(3, 32px);
    justify-content: center;
    height: 79px;
    padding: 7px 0;
    border: 1px solid #55708f;
    border-bottom-color: #ccd5e4;
    background: #fff;
}

.tray-icons svg {
    width: 17px;
    height: 17px;
    margin: 7px;
}

.hot {
    background: linear-gradient(#eee, #999 50%, #ddd);
}

.tray-popup a {
    display: block;
    height: 43px;
    border: 1px solid #55708f;
    border-top: none;
    color: #1b6bb8;
    font-family: "Open Sans", "Segoe UI", sans-serif;
    font-size: 12px;
    line-height: 42px;
}

/* Taskbar */
.taskbar {
    display: flex;
    align-items: center;
    flex-shrink: 0;
    height: 39px;
    border-top: 1px solid #4c545c;
    background: #080c14;
    color: #fff;
}

.taskbar button {
    display: flex;
    align-items: center;
    justify-content: center;
}

.start {
    margin: 0 14px 0 8px;
}

.task {
    width: 58px;
    height: 38px;
    margin-right: 4px;
}

.task.open {
    border: 1px solid #70757c;
    border-radius: 3px;
    background: linear-gradient(135deg, #55595f, #24282f);
}

.tray {
    display: flex;
    gap: 8px;
    align-items: center;
    margin-left: auto;
    font-family: "Open Sans", "Segoe UI", sans-serif;
    font-size: 12px;
}

.tray .up {
    width: 19px;
    height: 18px;
    border: 1px solid #999;
    background: #6c7075;
}

.lang {
    margin-right: 5px;
    padding-bottom: 3px;
}

.clock {
    width: 79px;
    font-size: 11px;
    line-height: 17px;
    text-align: center;
}

.show-desktop {
    width: 9px;
    height: 38px;
    border: 1px solid #555;
    background: #1c2026;
}
```
